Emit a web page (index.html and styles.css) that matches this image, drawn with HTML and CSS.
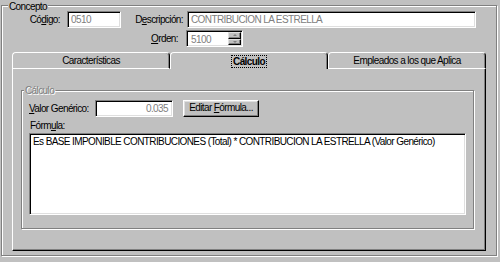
FILE: index.html
```html
<!DOCTYPE html>
<html lang="es">
<head>
<meta charset="UTF-8">
<title>Concepto</title>
<link rel="stylesheet" href="styles.css">
</head>
<body>
  <div class="group concepto">
    <div class="group-title">Concepto</div>

    <div class="row row-top">
      <span class="lbl lbl-codigo">Có<u>d</u>igo:</span>
      <div class="field field-codigo">0510</div>
      <span class="lbl lbl-desc">D<u>e</u>scripción:</span>
      <div class="field field-desc">CONTRIBUCION LA ESTRELLA</div>
    </div>

    <div class="row row-orden">
      <span class="lbl lbl-orden"><u>O</u>rden:</span>
      <div class="field spin">
        <span class="spin-text">5100</span>
        <div class="spin-btns">
          <span class="spin-btn"><i class="arrow up"></i></span>
          <span class="spin-btn"><i class="arrow down"></i></span>
        </div>
      </div>
    </div>

    <div class="tabs">
      <div class="tab">Características</div>
      <div class="tab active"><span class="focus">Cálculo</span></div>
      <div class="tab">Empleados a los que Aplica</div>
    </div>

    <div class="panel">
      <div class="group calculo">
        <div class="group-title disabled">Cálculo</div>

        <div class="row calc-row">
          <span class="lbl lbl-valor"><u>V</u>alor Genérico:</span>
          <div class="field field-valor">0.035</div>
          <div class="btn">Editar <u>F</u>órmula...</div>
        </div>

        <div class="lbl formula-lbl">Fórm<u>u</u>la:</div>
        <div class="field area">Es BASE IMPONIBLE CONTRIBUCIONES (Total) * CONTRIBUCION LA ESTRELLA (Valor Genérico)</div>
      </div>
    </div>
  </div>
</body>
</html>
```

FILE: styles.css
```css
* {
  box-sizing: border-box;
}

body {
  margin: 0;
  width: 500px;
  height: 262px;
  overflow: hidden;
  background-color: #c0c0c0;
  color: #000;
  font-family: "Liberation Sans", Arial, sans-serif;
  font-size: 10px;
  letter-spacing: -0.6px;
  line-height: 13px;
}

u {
  text-decoration: underline;
}

/* group boxes (etched frame) */
.group {
  border: 1px solid #808080;
  box-shadow: inset 1px 1px #fff, 1px 1px #fff;
}

.group-title {
  width: fit-content;
  padding: 0 1px;
  background-color: #c0c0c0;
  line-height: 13px;
}

.group-title.disabled {
  color: #808080;
  text-shadow: 1px 1px #fff;
}

.concepto {
  margin: 5px 0 0 1px;
  width: 496px;
  height: 251px;
}

.concepto > .group-title {
  margin: -6px 0 -2px 6px;
}

/* rows */
.row {
  display: flex;
  align-items: center;
  height: 17px;
}

.lbl {
  flex: none;
  white-space: nowrap;
}

.lbl-codigo {
  width: 58px;
  margin-right: 7px;
  text-align: right;
}

.lbl-desc {
  width: 62px;
  margin-right: 4px;
  text-align: right;
}

.row-orden {
  margin-top: 2px;
}

.lbl-orden {
  width: 176px;
  margin-right: 8px;
  text-align: right;
}

/* sunken fields */
.field {
  flex: none;
  height: 17px;
  padding: 1px 3px 0 3px;
  background-color: #fff;
  color: #808080;
  border: 1px solid;
  border-color: #808080 #fff #fff #808080;
  box-shadow: inset 1px 1px #000, inset -1px -1px #dfdfdf;
  white-space: nowrap;
  overflow: hidden;
}

.field-codigo {
  width: 54px;
}

.field-desc {
  width: 289px;
}

.spin {
  width: 57px;
  display: flex;
  padding: 0 1px 0 0;
}

.spin-text {
  flex: 1;
  padding: 2px 0 0 4px;
}

.spin-btns {
  width: 13px;
  margin: 1px 0;
  display: flex;
  flex-direction: column;
}

.spin-btn {
  flex: 1;
  display: flex;
  align-items: center;
  justify-content: center;
  background-color: #c0c0c0;
  border: 1px solid;
  border-color: #dfdfdf #000 #000 #dfdfdf;
  box-shadow: inset -1px -1px #808080;
}

.arrow {
  width: 0;
  height: 0;
  border-left: 2px solid transparent;
  border-right: 2px solid transparent;
}

.arrow.up {
  border-bottom: 2px solid #808080;
}

.arrow.down {
  border-top: 2px solid #808080;
}

/* tabs */
.tabs {
  display: grid;
  grid-template-columns: 158px 158px 158px;
  margin: 5px 0 0 10px;
  height: 17px;
}

.tab {
  height: 17px;
  border: 1px solid;
  border-color: #fff #000 #fff #fff;
  border-radius: 4px 4px 0 0;
  box-shadow: inset -1px 0 #808080;
  text-align: center;
  line-height: 15px;
  white-space: nowrap;
}

.tab.active {
  border-bottom: none;
  line-height: 17px;
  font-weight: bold;
}

.focus {
  display: inline-block;
  padding: 0 1px;
  line-height: 11px;
  border: 1px dotted #000;
}

.panel {
  margin-left: 10px;
  width: 474px;
  height: 182px;
  padding: 21px 0 0 8px;
  border-left: 1px solid #fff;
  border-right: 1px solid #000;
  border-bottom: 1px solid #000;
  box-shadow: inset -1px -1px #808080;
}

/* calculo frame */
.calculo {
  width: 453px;
  height: 139px;
}

.calculo > .group-title {
  margin: -7px 0 0 2px;
}

.calc-row {
  margin: 3px 0 0 7px;
}

.lbl-valor {
  width: 66px;
}

.field-valor {
  width: 78px;
  text-align: right;
  padding-right: 4px;
}

.btn {
  flex: none;
  width: 76px;
  height: 17px;
  margin-left: 10px;
  background-color: #c0c0c0;
  border: 1px solid;
  border-color: #fff #000 #000 #fff;
  box-shadow: inset -1px -1px #808080, inset 1px 1px #dfdfdf;
  text-align: center;
  line-height: 14px;
  white-space: nowrap;
}

.formula-lbl {
  margin: 2px 0 0 8px;
}

.area {
  margin: 1px 0 0 7px;
  width: 437px;
  height: 82px;
  padding: 1px 3px;
  color: #000;
  white-space: normal;
}
```
